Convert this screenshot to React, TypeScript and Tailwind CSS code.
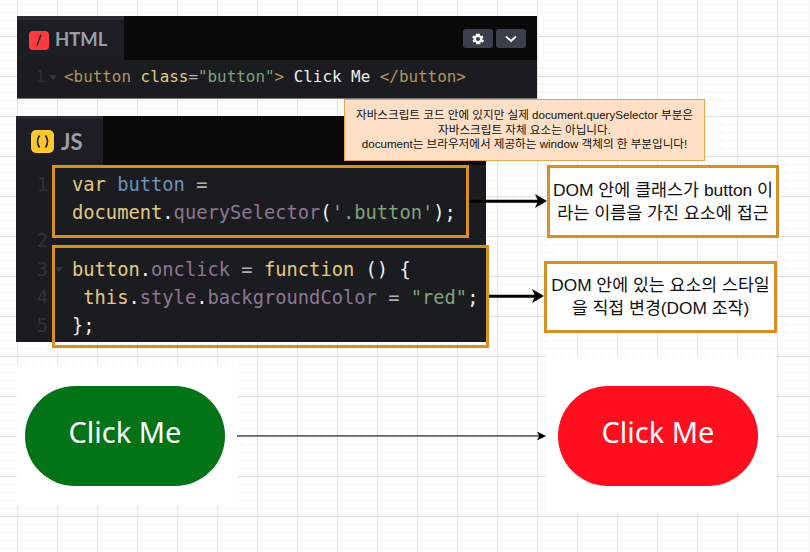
const MONO = "font-['DejaVu_Sans_Mono',monospace]";

const Tag = ({ children }: { children: React.ReactNode }) => <span className="text-[#b3945e]">{children}</span>;
const Y = ({ children }: { children: React.ReactNode }) => <span className="text-[#e3c981]">{children}</span>;
const P = ({ children }: { children: React.ReactNode }) => <span className="text-[#8c7791]">{children}</span>;
const G = ({ children }: { children: React.ReactNode }) => <span className="text-[#7fa378]">{children}</span>;
const Op = ({ children }: { children: React.ReactNode }) => <span className="text-[#b0b0b0]">{children}</span>;

function Fold() {
  return <span className="absolute left-[39px] top-[11px] h-0 w-0 border-x-[4px] border-t-[5px] border-x-transparent border-t-[#34363d]" />;
}

function JsLine({ n, fold, h = "h-[28.2px]", children }: { n: string; fold?: boolean; h?: string; children?: React.ReactNode }) {
  return (
    <div className={`relative flex ${h} leading-[28.2px]`}>
      <span className="w-[32px] text-right text-[#2f3138]">{n}</span>
      {fold && <Fold />}
      <span className="ml-[24px] whitespace-pre text-[#f0f0f0]">{children}</span>
    </div>
  );
}

function Pill({ bg, cls }: { bg: string; cls: string }) {
  return (
    <div className={`absolute flex items-center justify-center bg-white ${cls}`}>
      <div className={`flex h-[100px] w-[200px] items-center justify-center rounded-full pb-[8px] font-['Noto_Sans',sans-serif] text-[29px] text-white ${bg}`}>
        Click Me
      </div>
    </div>
  );
}

function Arrow({ cls, thick }: { cls: string; thick?: boolean }) {
  return (
    <div className={`absolute ${cls}`}>
      <div className={`absolute left-0 right-[6px] top-1/2 -translate-y-1/2 bg-black ${thick ? "h-[2.5px]" : "h-[1.2px]"}`} />
      <svg
        className="absolute right-0 top-1/2 -translate-y-1/2"
        width={thick ? 12 : 9}
        height={thick ? 14 : 9}
        viewBox="0 0 12 14"
        preserveAspectRatio="none"
      >
        <path d="M0 0 L12 7 L0 14 L3 7 Z" fill="#000" />
      </svg>
    </div>
  );
}

export default function App() {
  return (
    <div className="relative h-[552px] w-[810px] overflow-hidden bg-white bg-[linear-gradient(#e2e2e2_1px,transparent_1px),linear-gradient(90deg,#e2e2e2_1px,transparent_1px),linear-gradient(#f6f6f6_1px,transparent_1px),linear-gradient(90deg,#f6f6f6_1px,transparent_1px)] bg-[size:40px_40px,40px_40px,8px_8px,8px_8px] bg-[position:17px_36px,17px_36px,17px_36px,17px_36px]">
      {/* HTML panel */}
      <div className="absolute left-[17px] top-[16px] flex h-[83px] w-[520px] flex-col border-b border-b-[#77787c] bg-[#1b1c20]">
        <div className="flex h-[44px] items-stretch justify-between bg-[#0a0a0a]">
          <div className="flex w-[107px] items-center gap-[6px] border-t-[4px] border-t-[#2a2b31] bg-[#1d1e24] pl-[12px]">
            <span className="flex h-[19px] w-[20px] items-center justify-center rounded-[4px] bg-[#ff3c41]">
              <svg width="10" height="14" viewBox="0 0 10 14"><path d="M7 1.5 L3 12.5" stroke="#1d1e24" strokeWidth="1.4" /></svg>
            </span>
            <span className="font-['Lato',sans-serif] text-[18.5px] font-bold text-[#9a9ea9]">HTML</span>
          </div>
          <div className="flex gap-[3px] pr-[11px] pt-[13px]">
            <span className="flex h-[19px] w-[30px] items-center justify-center rounded-[3px] bg-[#3b3f4b]">
              <svg width="14" height="14" viewBox="0 0 24 24" fill="#fff"><path fillRule="evenodd" d="M19.4 13a7.6 7.6 0 0 0 0-2l2.1-1.600-2-3.500-2.500 1a7.500 7.500 0 0 0-1.700-1L15.400 3h-6.800l-.4 2.900a7.500 7.500 0 0 0-1.700 1l-2.500-1-2 3.500L4.600 11a7.600 7.600 0 0 0 0 2l-2.100 1.600 2 3.500 2.500-1a7.500 7.500 0 0 0 1.700 1l.4 2.900h6.800l.4-2.900a7.500 7.500 0 0 0 1.700-1l2.500 1 2-3.500zM12 15.500a3.500 3.500 0 1 1 0-7 3.500 3.500 0 0 1 0 7z" /></svg>
            </span>
            <span className="flex h-[19px] w-[30px] items-center justify-center rounded-[3px] bg-[#3b3f4b]">
              <svg width="12" height="8" viewBox="0 0 12 8" fill="none"><path d="M1 1.500 L6 6 L11 1.500" stroke="#fff" strokeWidth="1.800" /></svg>
            </span>
          </div>
        </div>
        <div className={`relative flex h-[38px] items-start pt-[7px] text-[15.9px] leading-[20px] ${MONO}`}>
          <span className="w-[28px] text-right text-[#2f3138]">1</span>
          <span className="absolute left-[32px] top-[15px] h-0 w-0 border-x-[4px] border-t-[5px] border-x-transparent border-t-[#34363d]" />
          <span className="ml-[19px] whitespace-pre text-[#f0f0f0]">
            <Tag>&lt;button</Tag> <Y>class</Y><Op>=</Op><G>"button"</G><Tag>&gt;</Tag> Click Me <Tag>&lt;/button&gt;</Tag>
          </span>
        </div>
      </div>

      {/* JS panel */}
      <div className="absolute left-[16px] top-[116px] flex h-[226px] w-[470px] flex-col bg-[#1b1c20]">
        <div className="flex h-[49px] bg-[#0a0a0a]">
          <div className="flex w-[87px] items-center gap-[7px] border-t-[3px] border-t-[#2a2b31] bg-[#1d1e24] pb-[2px] pl-[15px]">
            <span className="flex h-[23px] w-[23px] items-center justify-center rounded-[5px] bg-[#ffc72e]">
              <svg width="17" height="17" viewBox="0 0 17 17" fill="none" stroke="#26241c" strokeWidth="1.800">
                <path d="M5.500 2.500 Q1.500 8.500 5.500 14.500" />
                <path d="M11.500 2.500 Q15.500 8.500 11.500 14.500" />
              </svg>
            </span>
            <span className="font-['Lato',sans-serif] text-[22px] font-bold text-[#9a9ea9]">JS</span>
          </div>
        </div>
        <div className={`pt-[6px] text-[18.75px] ${MONO}`}>
          <JsLine n="1" h="h-[56.4px]">
            <Y>var</Y> <span className="text-[#6c93b8]">button</span> <Op>=</Op>{"\n"}<Y>document</Y>.<P>querySelector</P>(<G>'.button'</G>);
          </JsLine>
          <JsLine n="2" />
          <JsLine n="3" fold>
            <Y>button</Y>.<P>onclick</P> <Op>=</Op> <Y>function</Y> () {"{"}
          </JsLine>
          <JsLine n="4">
            {" "}<Y>this</Y>.<P>style</P>.<P>backgroundColor</P> <Op>=</Op> <G>"red"</G>;
          </JsLine>
          <JsLine n="5">{"};"}</JsLine>
        </div>
      </div>

      {/* Highlight boxes */}
      <div className="absolute left-[52px] top-[165px] h-[73px] w-[417px] border-[3px] border-[#d68f23]" />
      <div className="absolute left-[52px] top-[245px] h-[103px] w-[437px] border-[3px] border-[#d68f23]" />

      {/* Note */}
      <div className="absolute left-[344px] top-[99px] flex h-[62px] w-[361px] items-center justify-center border border-[#e6a64f] bg-[#ffe0c6] text-center font-['Liberation_Sans','Noto_Sans_CJK_KR',sans-serif] text-[11.6px] leading-[14.6px] text-[#111]">
        <p>
          자바스크립트 코드 안에 있지만 실제 document.querySelector 부분은
          <br />
          자바스크립트 자체 요소는 아닙니다.
          <br />
          document는 브라우저에서 제공하는 window 객체의 한 부분입니다!
        </p>
      </div>

      {/* Right labels */}
      <div className="absolute left-[547px] top-[165px] flex h-[73px] w-[232px] items-center justify-center border-[3px] border-[#d68f23] bg-white text-center font-['Liberation_Sans','Noto_Sans_CJK_KR',sans-serif] text-[17.4px] leading-[23px] text-[#111]">
        <p>DOM 안에 클래스가 button 이<br />라는 이름을 가진 요소에 접근</p>
      </div>
      <div className="absolute left-[544px] top-[261px] flex h-[72px] w-[233px] items-center justify-center border-[3px] border-[#d68f23] bg-white text-center font-['Liberation_Sans','Noto_Sans_CJK_KR',sans-serif] text-[17.3px] leading-[23px] text-[#111]">
        <p>DOM 안에 있는 요소의 스타일<br />을 직접 변경(DOM 조작)</p>
      </div>

      {/* Arrows */}
      <Arrow cls="left-[469px] top-[194px] h-[14px] w-[78px]" thick />
      <Arrow cls="left-[489px] top-[289px] h-[14px] w-[55px]" thick />

      {/* Buttons */}
      <Pill bg="bg-[#037318]" cls="left-[17px] top-[364px] h-[142px] w-[220px] pr-[4px] pt-[2px]" />
      <Pill bg="bg-[#ff0f1e]" cls="left-[546px] top-[356px] h-[158px] w-[231px] pr-[7px] pt-[2px]" />
      <Arrow cls="left-[237px] top-[431px] h-[9px] w-[309px]" />
    </div>
  );
}
